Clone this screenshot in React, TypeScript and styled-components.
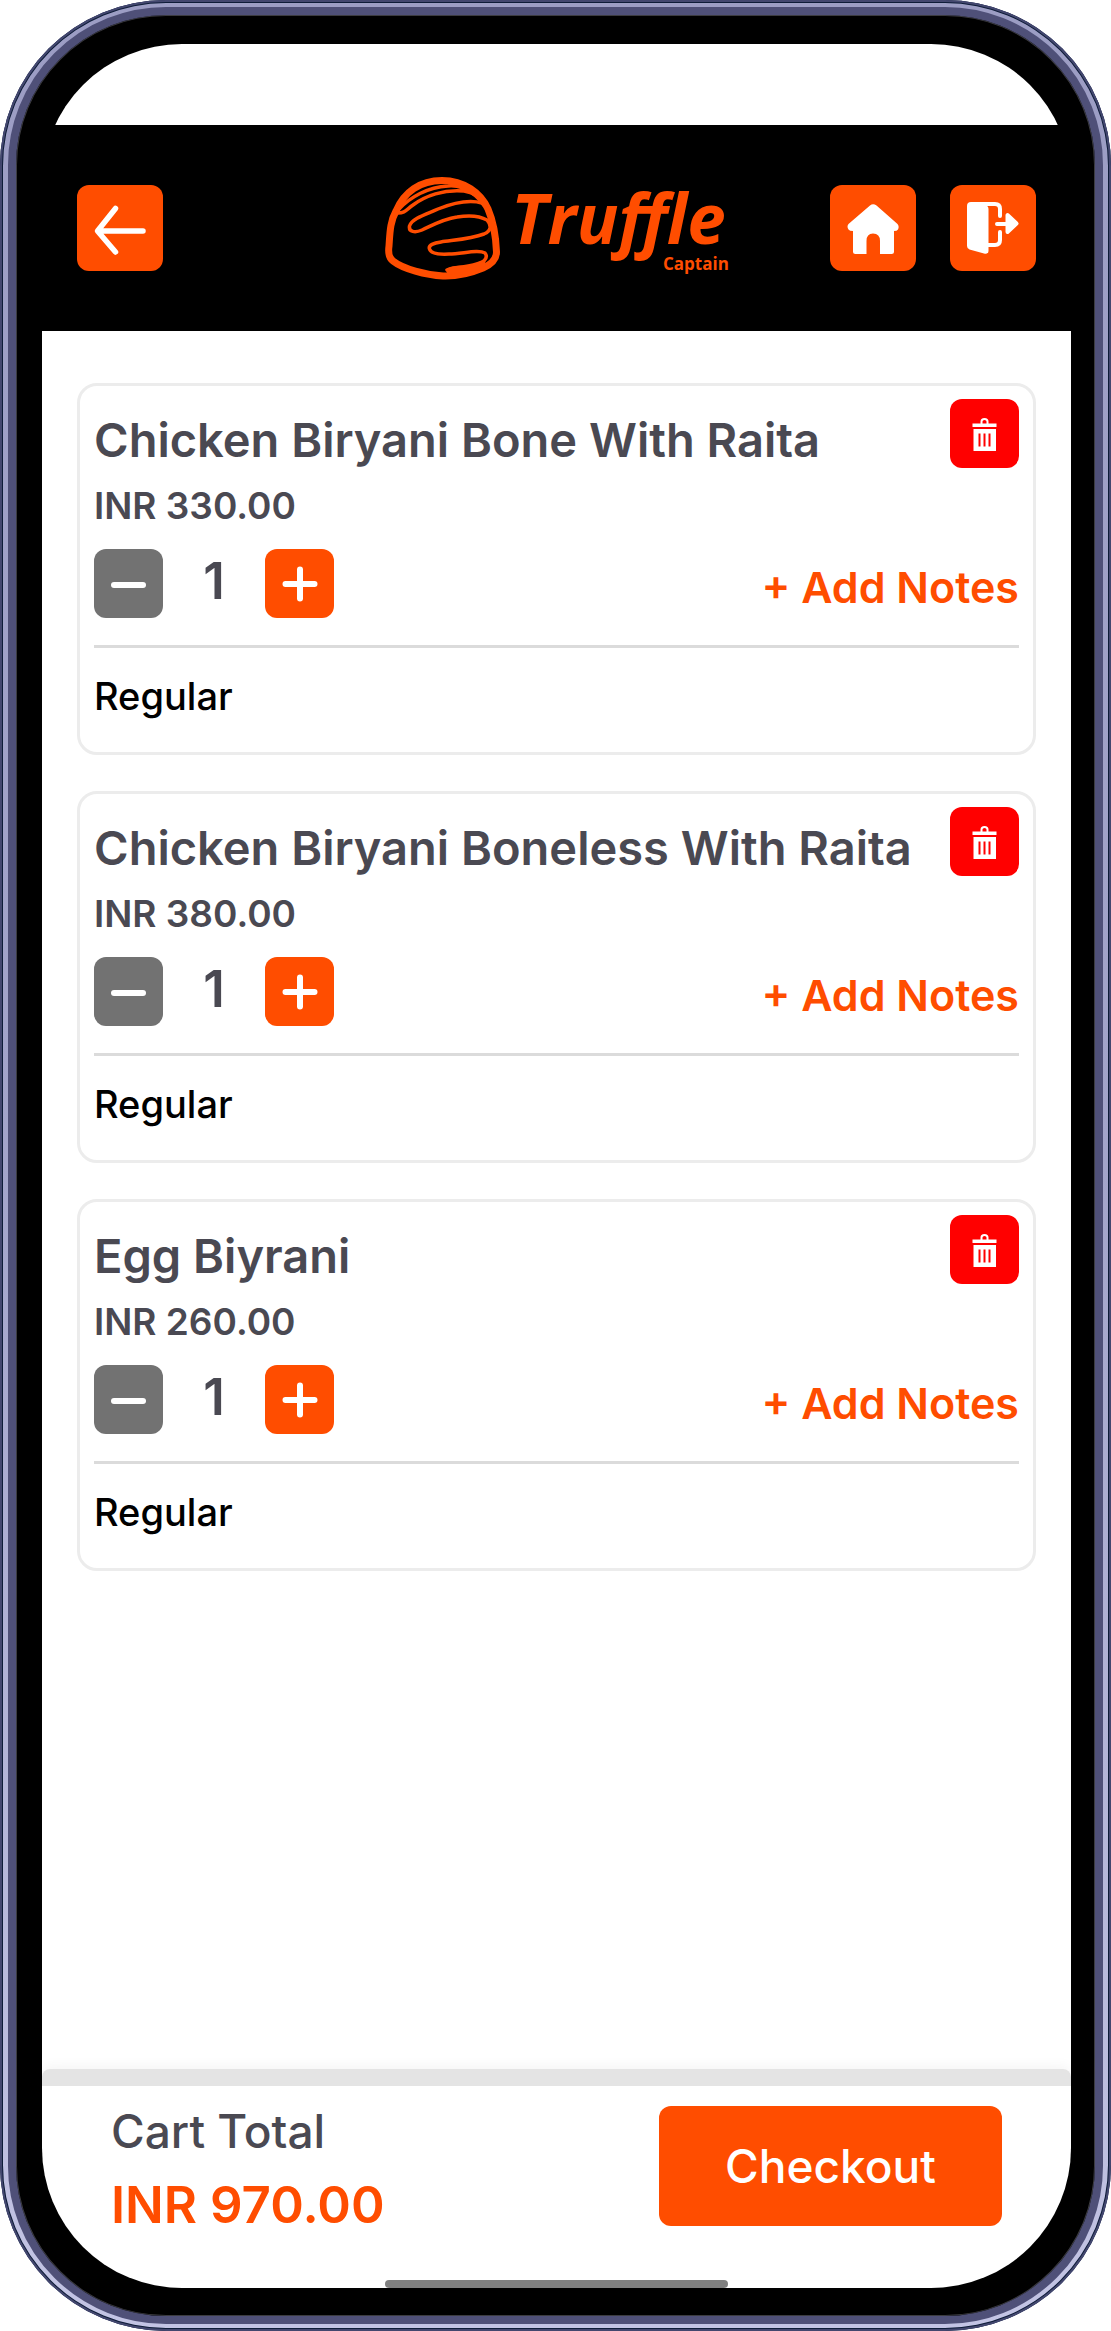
import React, { useState } from "react";
import styled, { createGlobalStyle } from "styled-components";

const GlobalStyle = createGlobalStyle`
  *, *::before, *::after { box-sizing: border-box; }
  body {
    margin: 0;
    background: #ffffff;
    font-family: Inter, "Liberation Sans", sans-serif;
    color: #4a4952;
  }
  button { font: inherit; border: 0; padding: 0; cursor: pointer; }
  h2, p { margin: 0; }
`;

const Shell = styled.div`
  display: flex;
  min-height: 100vh;
  padding: 7px 8px;
  border-radius: 166px;
  background: linear-gradient(#9c9dc4, #a3a4ca 50%, #c3c4e4);
  box-shadow: inset 0 0 0 2px #43476f, inset 0 0 0 3px #0e1c38;
`;

const Bezel = styled.div`
  display: flex;
  flex: 1;
  min-width: 0;
  padding: 29px 24px 28px 26px;
  border: 8px solid #4f5078;
  border-radius: 158px;
  background: #000000;
  box-shadow: inset 0 0 0 1px #3c3c40;
`;

const Screen = styled.div`
  display: flex;
  flex-direction: column;
  flex: 1;
  min-width: 0;
  overflow: hidden;
  border-radius: 140px;
`;

const StatusBar = styled.div`
  height: 81px;
  background: #ffffff;
`;

const Header = styled.header`
  display: grid;
  grid-template-columns: 1fr auto 1fr;
  align-items: center;
  padding: 50px 35px;
  background: #000000;
`;

const HeaderActions = styled.div`
  display: flex;
  justify-content: flex-end;
  gap: 34px;
`;

const IconButton = styled.button<{ $size: number; $tone: string }>`
  display: block;
  flex: none;
  width: ${(p) => p.$size}px;
  height: ${(p) => p.$size}px;
  border-radius: 12px;
  background: ${(p) => p.$tone};
  color: #ffffff;

  svg { display: block; width: 100%; height: 100%; }
`;

const LogoArt = styled.svg`
  display: block;
  width: 344px;
  height: 106px;
  overflow: visible;
`;

const Wordmark = styled.text`
  font: italic 700 69px "Open Sans", sans-serif;
  fill: #ff4d00;
`;

const Tagline = styled.text`
  font: 700 17px "Open Sans", sans-serif;
  fill: #ff4d00;
`;

const Content = styled.div`
  display: flex;
  flex-direction: column;
  flex: 1;
  background: #ffffff;
`;

const CartList = styled.main`
  display: flex;
  flex-direction: column;
  flex: 1;
  gap: 36px;
  padding: 52px 35px;
`;

const Card = styled.article`
  padding: 13px 14px 34px;
  border: 3px solid #ececec;
  border-radius: 20px;
`;

const CardTop = styled.div`
  display: flex;
  justify-content: space-between;
  align-items: flex-end;
`;

const ItemName = styled.h2`
  font-size: 47px;
  font-weight: 600;
  line-height: 56px;
  white-space: nowrap;
`;

const ItemPrice = styled.p`
  margin: 16px 0 21px;
  font-size: 37px;
  font-weight: 600;
  line-height: 44px;
`;

const Controls = styled.div`
  display: flex;
  justify-content: space-between;
  align-items: flex-end;
  padding-bottom: 27px;
  border-bottom: 3px solid #dbdbdb;
`;

const Stepper = styled.div`
  display: flex;
`;

const Quantity = styled.output`
  width: 102px;
  text-align: center;
  font-size: 51px;
  font-weight: 600;
  line-height: 64px;
`;

const NotesButton = styled.button`
  background: none;
  color: #ff4d00;
  font-size: 43px;
  font-weight: 600;
  line-height: 62px;
`;

const Variant = styled.p`
  margin-top: 26px;
  color: #000000;
  font-size: 38px;
  font-weight: 500;
  line-height: 44px;
`;

const Footer = styled.footer`
  display: flex;
  justify-content: space-between;
  align-items: flex-start;
  padding: 20px 69px 46px;
  border-top: 17px solid #e4e4e4;
  border-radius: 8px 8px 0 0;
  box-shadow: 0 -4px 12px #0000000a;
`;

const TotalLabel = styled.p`
  font-size: 46px;
  font-weight: 500;
  line-height: 50px;
`;

const TotalAmount = styled.p`
  margin-top: 20px;
  color: #ff4d00;
  font-size: 51px;
  font-weight: 600;
  line-height: 58px;
`;

const CheckoutButton = styled.button`
  width: 343px;
  height: 120px;
  border-radius: 12px;
  background: #ff4d00;
  color: #ffffff;
  font-size: 46px;
  font-weight: 500;
`;

const HomeIndicator = styled.div`
  align-self: center;
  width: 343px;
  height: 8px;
  border-radius: 4px;
  background: #808080;
`;

const orange = "#ff4d00";

function Logo() {
  return (
    <LogoArt viewBox="15 15 344 106" role="img" aria-label="Truffle Captain">
      <g fill="none" stroke={orange} strokeLinecap="round" strokeLinejoin="round">
        <path
          strokeWidth="7"
          d="M73 116C56 115 33 109 23 101C19 98 18 93 19 86C20 72 20 62 26 51C34 32 50 20.500 72 20.500C94 20.500 111 33 118 49C124 63 126 79 126.500 92C126.500 99 122 104 113 108C101 113 88 116.500 73 116Z"
        />
        <path
          strokeWidth="3.500"
          d="M28 53C35 53 36 50 43 45C55 36 74 29 94 31M28 50C40 37 58 27 78 26C88 25 98 29 104 34M94 31C106 33 113 40 116 46M112 43C98 39 83 43 68 49C57 54 42 58 39.500 66C38.500 72 45 73 52 70C63 65 73 59 87 57C99 55 110 56 117 60C122 66 121 71 114 74C101 79 84 80 71 82C64 83 58 85 59.500 89C61 94 70 94.500 79 94C92 94 108 89 115 93C119 98 113 103 105 106C96 109 86 105 77 110"
        />
        <path strokeWidth="7" d="M80 111C90 108 101 109 112 104M95 28C104 31 111 38 115 44" />
      </g>
      <Wordmark x="141" y="84">Truffle</Wordmark>
      <Tagline x="293" y="110">Captain</Tagline>
    </LogoArt>
  );
}

function BackIcon() {
  return (
    <svg viewBox="0 0 86 86" aria-hidden="true">
      <path
        d="M66 46H21M38.500 23.500L20.500 46L38.500 67"
        fill="none"
        stroke="currentColor"
        strokeWidth="5.500"
        strokeLinecap="round"
        strokeLinejoin="round"
      />
    </svg>
  );
}

function HomeIcon() {
  return (
    <svg viewBox="0 0 86 86" aria-hidden="true">
      <path
        fill="currentColor"
        d="M40 20.500Q43 18 46.500 20.500L67.500 39Q69.500 41.500 68 44.500Q67 46 64 46V66.500Q64 69 61.500 69H50V56Q50 48.500 43 48.500Q36.500 48.500 36.500 56V69H25.500Q23 69 23 66.500V46Q19.500 46 18.500 44.500Q16.500 41.500 18.500 39Z"
      />
    </svg>
  );
}

function ExitIcon() {
  return (
    <svg viewBox="0 0 86 86" aria-hidden="true">
      <path
        fill="currentColor"
        d="M21 17H31L37 20.500Q38.500 22 38.500 24V66Q38 69.500 34 68.500L19.500 64.500Q17 63.500 17 61V21Q17 17 21 17Z"
      />
      <path
        d="M29 19H45Q50 19 50 24V31M38 60H45Q50 60 50 55V47M47 39H58"
        fill="none"
        stroke="currentColor"
        strokeWidth="4"
        strokeLinecap="round"
      />
      <path
        d="M57.500 30V47L66.500 38.500Z"
        fill="currentColor"
        stroke="currentColor"
        strokeWidth="4"
        strokeLinejoin="round"
      />
    </svg>
  );
}

function TrashIcon() {
  return (
    <svg viewBox="0 0 69 69" aria-hidden="true">
      <path
        d="M31.500 25V22.500Q31.500 20 34.500 20T37.500 22.500V25"
        fill="none"
        stroke="currentColor"
        strokeWidth="2"
      />
      <path
        fill="currentColor"
        fillRule="evenodd"
        d="M22.500 24.500H46.500V28H22.500ZM23.500 30H46V52H23.500ZM28.500 34.500V47.500H30.500V34.500ZM33.500 34.500V47.500H35.500V34.500ZM38.500 34.500V47.500H40.500V34.500Z"
      />
    </svg>
  );
}

function MinusIcon() {
  return (
    <svg viewBox="0 0 69 69" aria-hidden="true">
      <path d="M20 36H49" stroke="currentColor" strokeWidth="6" strokeLinecap="round" />
    </svg>
  );
}

function PlusIcon() {
  return (
    <svg viewBox="0 0 69 69" aria-hidden="true">
      <path d="M20.500 35H49.500M35 20.500V49.500" stroke="currentColor" strokeWidth="6" strokeLinecap="round" />
    </svg>
  );
}

type Item = { id: number; name: string; price: number; variant: string; qty: number };

const initialItems: Item[] = [
  { id: 1, name: "Chicken Biryani Bone With Raita", price: 330, variant: "Regular", qty: 1 },
  { id: 2, name: "Chicken Biryani Boneless With Raita", price: 380, variant: "Regular", qty: 1 },
  { id: 3, name: "Egg Biyrani", price: 260, variant: "Regular", qty: 1 },
];

const money = (value: number) => `INR ${value.toFixed(2)}`;

export default function App() {
  const [items, setItems] = useState(initialItems);

  const changeQty = (id: number, delta: number) =>
    setItems((list) => list.map((i) => (i.id === id ? { ...i, qty: Math.max(1, i.qty + delta) } : i)));
  const remove = (id: number) => setItems((list) => list.filter((i) => i.id !== id));
  const total = items.reduce((sum, i) => sum + i.price * i.qty, 0);

  return (
    <>
      <GlobalStyle />
      <Shell>
        <Bezel>
          <Screen>
            <StatusBar />
            <Header>
              <IconButton $size={86} $tone={orange} aria-label="Back">
                <BackIcon />
              </IconButton>
              <Logo />
              <HeaderActions>
                <IconButton $size={86} $tone={orange} aria-label="Home">
                  <HomeIcon />
                </IconButton>
                <IconButton $size={86} $tone={orange} aria-label="Log out">
                  <ExitIcon />
                </IconButton>
              </HeaderActions>
            </Header>
            <Content>
              <CartList>
                {items.map((item) => (
                  <Card key={item.id}>
                    <CardTop>
                      <ItemName>{item.name}</ItemName>
                      <IconButton $size={69} $tone="#ff0000" aria-label="Remove" onClick={() => remove(item.id)}>
                        <TrashIcon />
                      </IconButton>
                    </CardTop>
                    <ItemPrice>{money(item.price)}</ItemPrice>
                    <Controls>
                      <Stepper>
                        <IconButton $size={69} $tone="#727272" aria-label="Decrease" onClick={() => changeQty(item.id, -1)}>
                          <MinusIcon />
                        </IconButton>
                        <Quantity>{item.qty}</Quantity>
                        <IconButton $size={69} $tone={orange} aria-label="Increase" onClick={() => changeQty(item.id, 1)}>
                          <PlusIcon />
                        </IconButton>
                      </Stepper>
                      <NotesButton>+ Add Notes</NotesButton>
                    </Controls>
                    <Variant>{item.variant}</Variant>
                  </Card>
                ))}
              </CartList>
              <Footer>
                <div>
                  <TotalLabel>Cart Total</TotalLabel>
                  <TotalAmount>{money(total)}</TotalAmount>
                </div>
                <CheckoutButton>Checkout</CheckoutButton>
              </Footer>
              <HomeIndicator />
            </Content>
          </Screen>
        </Bezel>
      </Shell>
    </>
  );
}
